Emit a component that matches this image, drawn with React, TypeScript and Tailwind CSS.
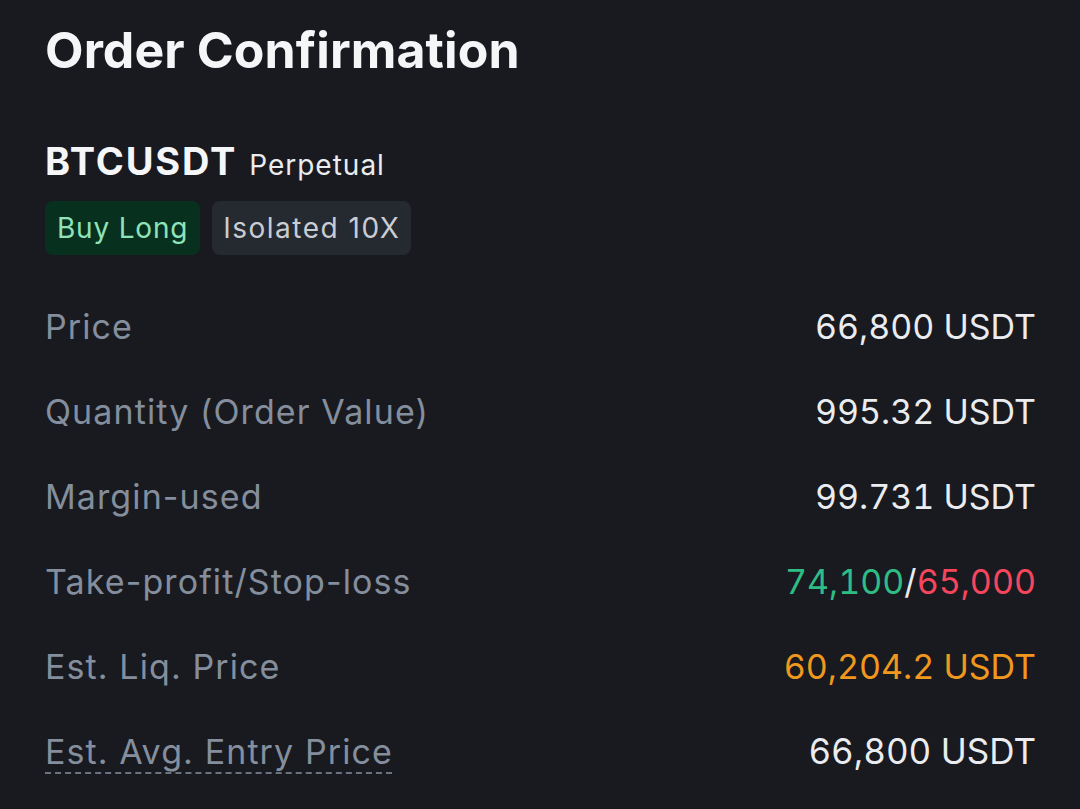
import React from 'react';

type Row = {
  label: string;
  value: React.ReactNode;
  dashed?: boolean;
  big?: boolean;
};

const rows: Row[] = [
  { label: 'Price', value: <span className="text-[#eaecef]">66,800 USDT</span> },
  { label: 'Quantity (Order Value)', value: <span className="text-[#eaecef]">995.32 USDT</span> },
  { label: 'Margin-used', value: <span className="text-[#eaecef]">99.731 USDT</span> },
  {
    label: 'Take-profit/Stop-loss',
    value: (
      <span>
        <span className="text-[#2ebd85]">74,100</span>
        <span className="text-[#eaecef]">/</span>
        <span className="text-[#f6465d]">65,000</span>
      </span>
    ),
  },
  { label: 'Est. Liq. Price', value: <span className="text-[#f0981e]">60,204.2 USDT</span> },
  { label: 'Est. Avg. Entry Price', value: <span className="text-[#eaecef]">66,800 USDT</span>, dashed: true, big: true },
];

export default function App() {
  return (
    <div
      className="w-[1080px] h-[809px] overflow-hidden bg-[#181a20] pl-[45px] pr-[44px]"
      style={{ fontFamily: 'Inter, "Noto Sans", sans-serif' }}
    >
      {/* Header */}
      <h1 className="pt-[20px] text-[50px] leading-[60px] font-bold text-[#f5f6f8] tracking-[0.1px]">
        Order Confirmation
      </h1>

      <div className="mt-[59px] flex items-baseline gap-[12px] leading-[44px]">
        <span className="text-[38px] font-bold text-[#f5f6f8] tracking-[1.8px]">BTCUSDT</span>
        <span className="text-[28px] text-[#eaecef] tracking-[1px]">Perpetual</span>
      </div>

      <div className="mt-[14px] flex gap-[12px]">
        <span className="h-[54px] px-[12px] flex items-center rounded-[8px] bg-[#07301f] text-[28px] text-[#8ee3b8] tracking-[0.8px]">
          Buy Long
        </span>
        <span className="h-[54px] px-[11px] flex items-center rounded-[8px] bg-[#252930] text-[28px] text-[#c9ccd3] tracking-[1.5px]">
          Isolated 10X
        </span>
      </div>

      {/* Details */}
      <div className="mt-[29px] flex flex-col">
        {rows.map((r) => (
          <div key={r.label} className="h-[85px] flex items-center justify-between">
            <span
              className={`text-[34px] text-[#848e9c] tracking-[1.1px] ${
                r.dashed
                  ? 'underline decoration-dashed decoration-[#6b7280] decoration-[1.5px] underline-offset-[8px]'
                  : ''
              }`}
            >
              {r.label}
            </span>
            <span className={`tabular-nums ${r.big ? 'text-[35px]' : 'text-[34px]'}`}>
              {r.value}
            </span>
          </div>
        ))}
      </div>
    </div>
  );
}
